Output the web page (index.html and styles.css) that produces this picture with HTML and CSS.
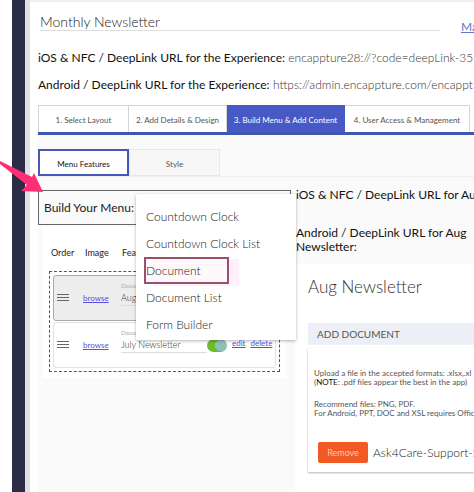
FILE: index.html
```html
<!DOCTYPE html>
<html lang="en">
<head>
  <meta charset="UTF-8" />
  <meta name="viewport" content="width=device-width, initial-scale=1.0"/>
  <title>Monthly Newsletter</title>
  <link rel="stylesheet" href="styles.css">
</head>
<body>
  <div class="app">
    <div class="sidebar"></div>

    <main class="page">
      <!-- Experience title -->
      <div class="title-row">
        <input class="title-input" type="text" value="Monthly Newsletter" aria-label="Experience name" />
        <a class="manage-link" href="#">Ma</a>
      </div>

      <p class="deeplink"><b>iOS &amp; NFC / DeepLink URL for the Experience:</b> encappture28://?code=deepLink-3510</p>
      <p class="deeplink"><b>Android / DeepLink URL for the Experience:</b> https://admin.encappture.com/encappt</p>

      <!-- Steps -->
      <nav class="steps">
        <button class="step step-layout">1. Select Layout</button>
        <button class="step step-details">2. Add Details &amp; Design</button>
        <button class="step step-build active">3. Build Menu &amp; Add Content</button>
        <button class="step step-access">4. User Access &amp; Management</button>
      </nav>

      <div class="content">
        <div class="subtabs">
          <button class="subtab active">Menu Features</button>
          <button class="subtab">Style</button>
        </div>

        <div class="columns">
          <section class="builder">
            <h2 class="builder-title">Build Your Menu:</h2>

            <div class="menu-card">
              <div class="menu-head">
                <span class="col-order">Order</span>
                <span class="col-image">Image</span>
                <span>Feature</span>
              </div>

              <div class="drop-zone">
                <div class="menu-item selected">
                  <svg class="handle" viewBox="0 0 12 10"><path d="M0 1.500h12M0 4.500h12M0 7.500h12" /></svg>
                  <a class="browse" href="#">browse</a>
                  <div class="field">
                    <label for="feature1">Document</label>
                    <input id="feature1" type="text" value="Aug Newsletter" />
                  </div>
                  <input class="toggle" type="checkbox" aria-label="Show Aug Newsletter" checked />
                  <a class="action" href="#">edit</a>
                  <a class="action" href="#">delete</a>
                </div>
                <div class="menu-item">
                  <svg class="handle" viewBox="0 0 12 10"><path d="M0 1.500h12M0 4.500h12M0 7.500h12" /></svg>
                  <a class="browse" href="#">browse</a>
                  <div class="field">
                    <label for="feature2">Document</label>
                    <input id="feature2" type="text" value="July Newsletter" />
                  </div>
                  <input class="toggle" type="checkbox" aria-label="Show July Newsletter" checked />
                  <a class="action" href="#">edit</a>
                  <a class="action" href="#">delete</a>
                </div>
              </div>
            </div>

            <!-- Feature type menu -->
            <div class="feature-menu">
              <button>Countdown Clock</button>
              <button>Countdown Clock List</button>
              <button class="current">Document</button>
              <button>Document List</button>
              <button>Form Builder</button>
            </div>
          </section>

          <section class="details">
            <div class="detail-links">
              <p>iOS &amp; NFC / DeepLink URL for Aug</p>
              <p>Android / DeepLink URL for Aug<br>Newsletter:</p>
            </div>
            <div class="detail-body">
              <h2 class="detail-title">Aug Newsletter</h2>
              <h3 class="detail-bar">ADD DOCUMENT</h3>
              <div class="upload-card">
                <p>Upload a file in the accepted formats: .xlsx,.xl<br>(<b>NOTE</b>: .pdf files appear the best in the app)</p>
                <p>Recommend files: PNG, PDF.<br>For Android, PPT, DOC and XSL requires Offic</p>
                <div class="file-row">
                  <button class="remove">Remove</button>
                  <span class="file-name">Ask4Care-Support-S</span>
                </div>
              </div>
            </div>
          </section>
        </div>
      </div>
    </main>

    <svg class="arrow" viewBox="0 0 46 36"><path d="M0 1L32 17L34 13L43 32L21 31L27 25L0 4Z" /></svg>
  </div>
</body>
</html>
```

FILE: styles.css
```css
* {
  box-sizing: border-box;
}

body {
  margin: 0;
  font-family: Lato, "Liberation Sans", sans-serif;
  font-size: 12px;
  color: #555;
  background: #fff;
  overflow: hidden;
}

h2, h3, p {
  margin: 0;
  font-weight: normal;
}

button, input {
  font-family: inherit;
}

a {
  color: #5b4fe0;
}

.app {
  position: relative;
  display: flex;
  min-height: 100vh;
  padding-left: 12px;
}

.sidebar {
  flex: none;
  width: 18px;
  background: #2b2c45;
  border-right: 5px solid #dfe0e3;
}

.page {
  flex: 1;
  min-width: 0;
  display: flex;
  flex-direction: column;
  padding-left: 8px;
  border-top: 2px solid #eee;
  white-space: nowrap;
  overflow: hidden;
}

.title-row {
  display: flex;
  gap: 21px;
  padding: 10px 0 0 2px;
  margin-bottom: 17px;
  height: 31px;
}

.title-input {
  flex: none;
  width: 400px;
  height: 19px;
  padding: 0;
  border: none;
  border-bottom: 1px solid #ddd;
  background: none;
  font-size: 14px;
  font-weight: 300;
  color: #222;
}

.manage-link {
  padding-top: 8px;
  font-size: 12px;
  line-height: 14px;
  color: #6677cc;
}

.deeplink {
  height: 27px;
  line-height: 16px;
  font-weight: 300;
  color: #333;
}

.deeplink b {
  font-weight: normal;
  color: #111;
}

.steps {
  display: flex;
  margin-top: 1px;
  border-bottom: 3px solid #3f57b3;
}

.step {
  flex: none;
  height: 27px;
  padding: 2px 0 0;
  border: 1px solid #d5d5d5;
  border-bottom: none;
  border-left: none;
  background: #fff;
  font-size: 8px;
  color: #555;
}

.step-layout {
  width: 91px;
  border-left: 1px solid #d5d5d5;
}

.step-details {
  width: 98px;
}

.step-build {
  width: 118px;
}

.step-access {
  width: 125px;
}

.step.active {
  background: #4759c4;
  border-color: #4759c4;
  color: #fff;
}

.content {
  flex: 1;
  display: flex;
  flex-direction: column;
  padding-top: 14px;
  background: #fafafa;
}

.subtabs {
  display: flex;
  margin-bottom: 13px;
  border-bottom: 1px solid #eee;
}

.subtab {
  width: 91px;
  height: 27px;
  padding: 2px 0 0;
  border: 1px solid #e8e8e8;
  background: #f7f7f7;
  font-size: 8px;
  color: #555;
}

.subtab.active {
  border: 2px solid #4759b8;
  background: #fff;
  color: #111;
}

.columns {
  flex: 1;
  display: flex;
}

.builder {
  position: relative;
  flex: none;
  width: 257px;
}

.builder-title {
  width: 253px;
  height: 35px;
  padding-left: 5px;
  border: 1px solid #62656c;
  font-size: 12px;
  line-height: 34px;
  color: #222;
}

.menu-card {
  width: 243px;
  margin: 2px 0 0 5px;
  padding: 18px 6px 6px;
  background: #fff;
}

.menu-head {
  display: flex;
  padding-left: 2px;
  margin-bottom: 10px;
  font-size: 9px;
  line-height: 16px;
  color: #222;
}

.col-order {
  width: 34px;
}

.col-image {
  width: 37px;
}

.drop-zone {
  display: flex;
  flex-direction: column;
  gap: 1px;
  padding: 3px;
  border: 1px dashed #555;
}

.menu-item {
  display: flex;
  align-items: center;
  height: 46px;
  padding-left: 3px;
  border: 1px solid #e2e2e2;
  border-radius: 3px;
  font-size: 8px;
}

.menu-item.selected {
  background: #ededed;
  border-color: #aaa;
}

.handle {
  flex: none;
  width: 12px;
  height: 10px;
  margin-right: 14px;
  fill: none;
  stroke: #666;
}

.browse {
  flex: none;
  width: 38px;
}

.field {
  flex: none;
  display: flex;
  flex-direction: column;
  width: 86px;
  padding-bottom: 8px;
}

.field label {
  font-size: 6px;
  line-height: 8px;
  color: #aaa;
}

.field input {
  width: 100%;
  height: 16px;
  padding: 0;
  border: none;
  border-bottom: 1px solid #ddd;
  background: none;
  font-size: 9px;
  font-weight: 300;
  color: #333;
}

.toggle {
  appearance: none;
  flex: none;
  width: 20px;
  height: 13px;
  margin: 0 5px 0 0;
  border-radius: 7px;
  background: radial-gradient(circle at 14px 50%, #8fc0b4 6px, #6cbb2e 6px);
}

.action {
  margin-right: 5px;
  padding-bottom: 4px;
  line-height: 14px;
}

.feature-menu {
  position: absolute;
  top: 4px;
  left: 98px;
  width: 160px;
  padding: 9px 8px 2px;
  background: #fff;
  box-shadow: 0 1px 3px rgba(0, 0, 0, 0.3);
}

.feature-menu button {
  display: block;
  height: 27px;
  padding: 0 2px;
  border: none;
  background: none;
  font-size: 12px;
  font-weight: 300;
  color: #222;
}

.feature-menu .current {
  width: 85px;
  padding: 0;
  border: 2px solid #99506a;
  background: #fff8fb;
  box-shadow: 10px 2px 0 #fff0fc;
  text-align: left;
}

.details {
  flex: 1;
  min-width: 0;
  display: flex;
  flex-direction: column;
}

.detail-links {
  height: 74px;
  padding-left: 1px;
  line-height: 14px;
  color: #111;
}

.detail-links p {
  margin-top: -2px;
  padding-bottom: 26px;
}

.detail-body {
  flex: 1;
  padding: 12px 0 0 13px;
  background: #fff;
}

.detail-title {
  margin-bottom: 25px;
  font-size: 17px;
  font-weight: 300;
  line-height: 22px;
  color: #333;
}

.detail-bar {
  padding-left: 9px;
  margin-bottom: 3px;
  background: #eceff5;
  font-size: 10px;
  line-height: 22px;
  color: #555;
}

.upload-card {
  padding: 21px 0 9px 6px;
  box-shadow: 0 1px 2px rgba(0, 0, 0, 0.3);
  font-size: 8px;
  line-height: 9px;
}

.upload-card p {
  margin-bottom: 13px;
}

.upload-card b {
  font-weight: normal;
  color: #111;
}

.file-row {
  display: flex;
  align-items: center;
  gap: 5px;
  padding: 11px 0 0 4px;
}

.remove {
  flex: none;
  width: 50px;
  height: 21px;
  padding: 0;
  border: none;
  border-radius: 2px;
  background: #f15a24;
  font-size: 9px;
  color: #ffc4b0;
}

.file-name {
  font-size: 12px;
  font-weight: 300;
  line-height: 16px;
  color: #222;
}

.arrow {
  position: absolute;
  top: 160px;
  left: 0;
  width: 46px;
  height: 36px;
  fill: #ff2e74;
}
```
